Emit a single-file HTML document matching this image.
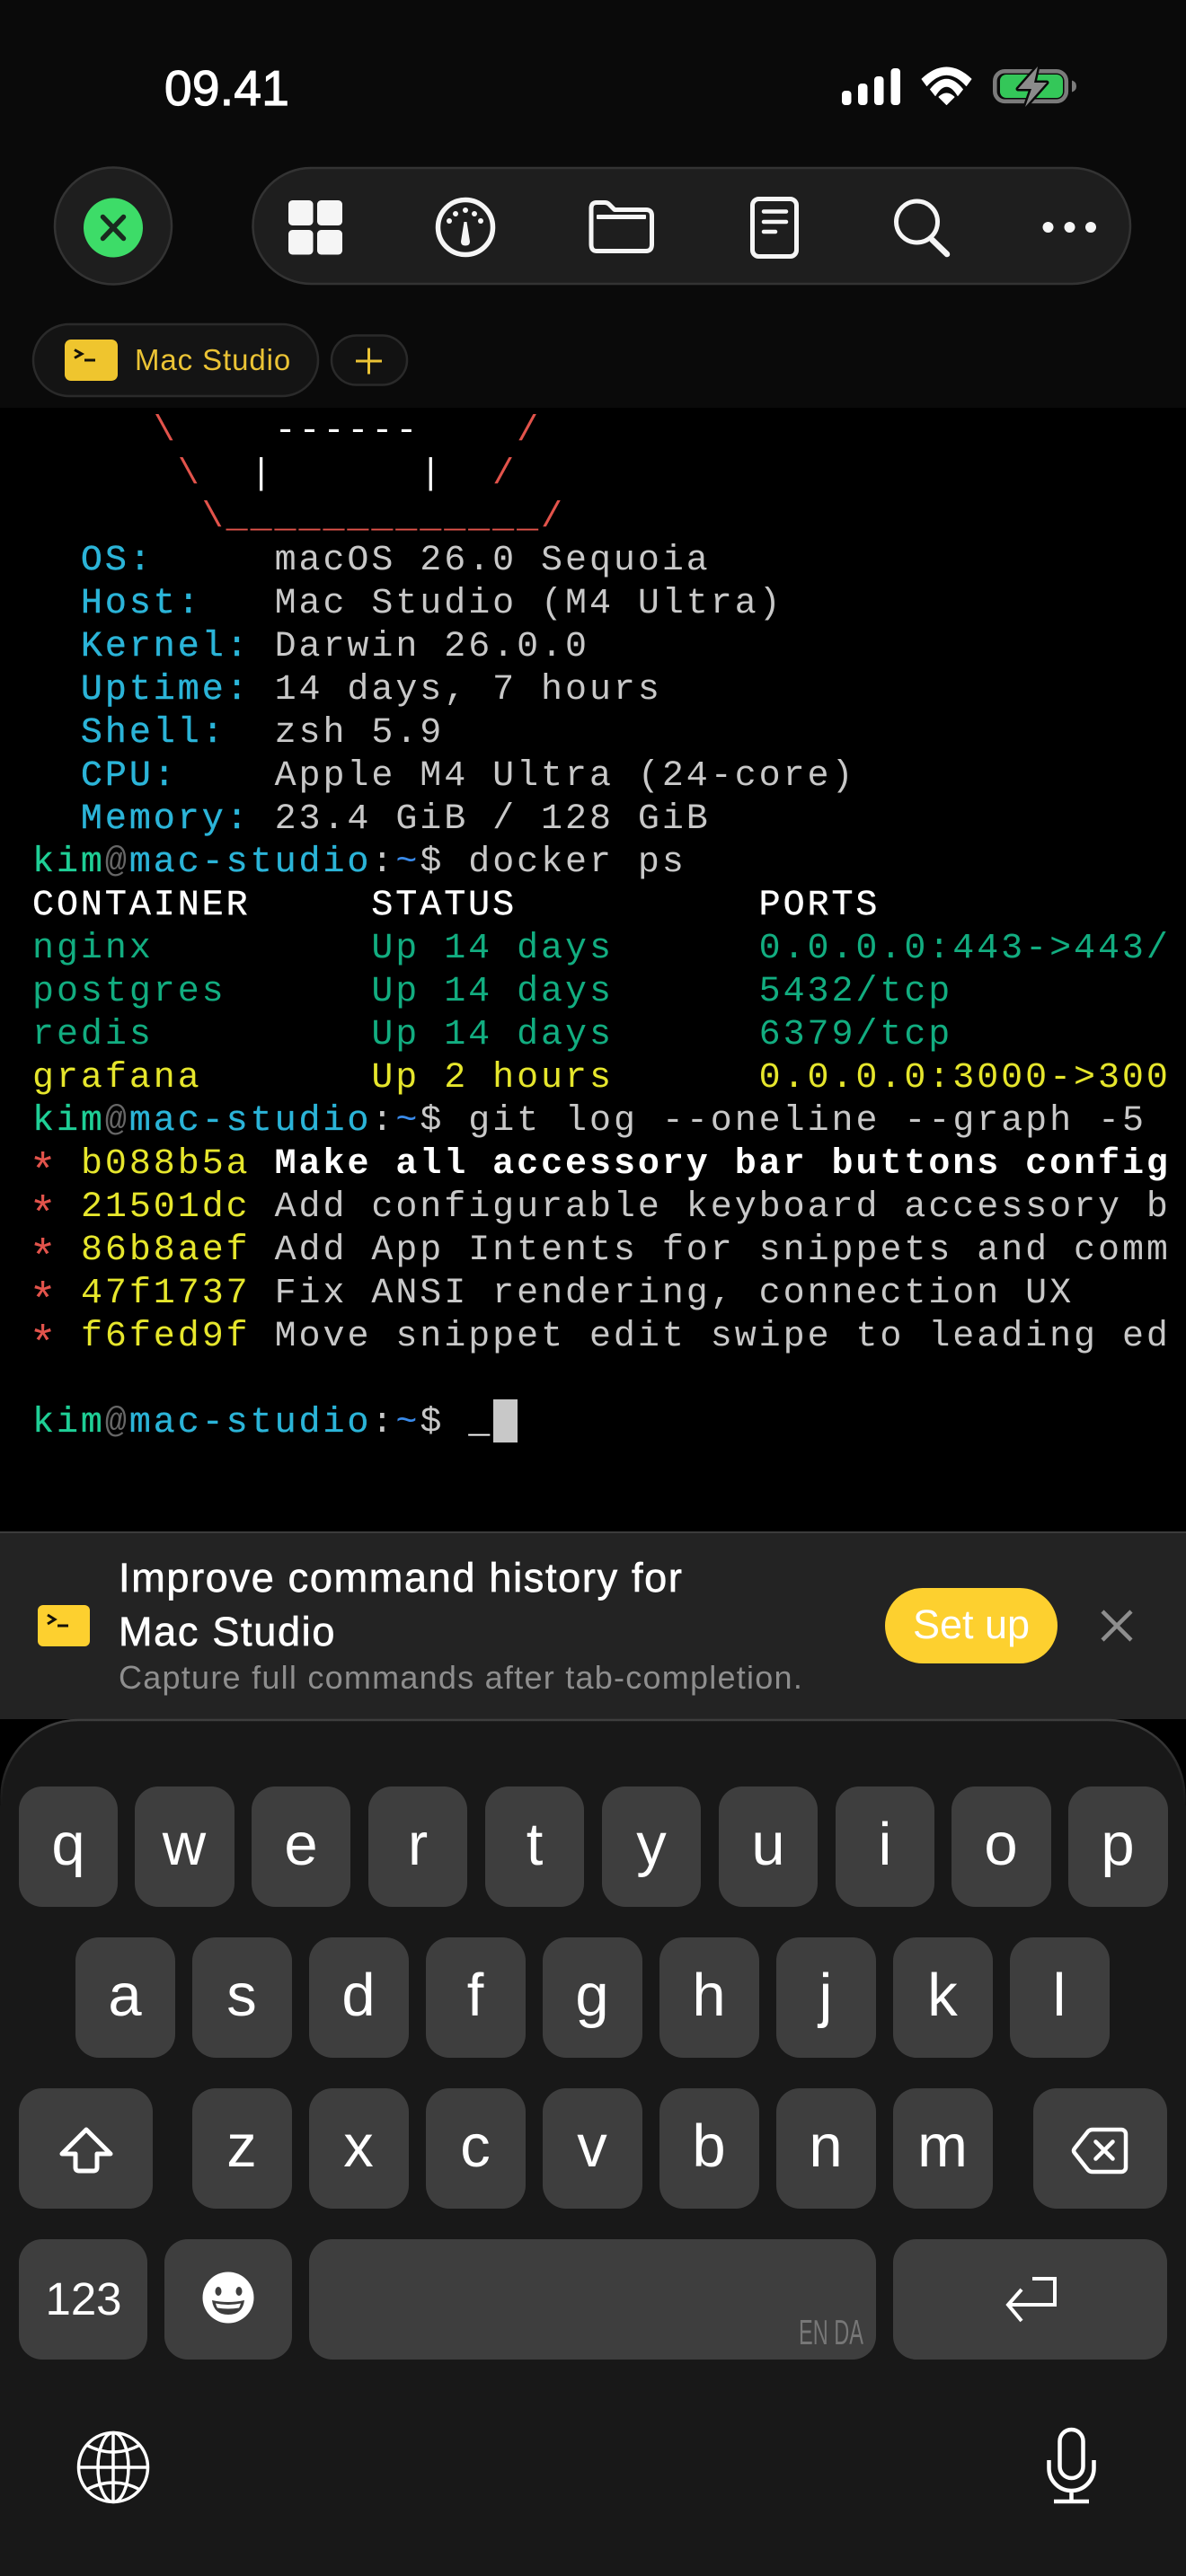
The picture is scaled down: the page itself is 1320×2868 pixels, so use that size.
<!DOCTYPE html>
<html lang="en"><head><meta charset="utf-8"><title>Terminal</title>
<style>
html,body{margin:0;padding:0;background:#000;width:1320px;height:2868px;overflow:hidden}
svg{position:absolute;left:0;top:0}
svg text{font-family:"Liberation Sans",sans-serif}
pre{position:absolute;left:36px;top:457px;margin:0;font:40px/48px "Liberation Mono",monospace;letter-spacing:2.95px;color:#c8c8c8;white-space:pre}
.r{color:#e2534b}.w{color:#fff}.l{color:#2bb4d8;-webkit-text-stroke:.4px #2bb4d8}
.g{color:#1fcf96;-webkit-text-stroke:.3px #1fcf96}.a{color:#666}.b{color:#2bb4d8;-webkit-text-stroke:.3px #2bb4d8}.t{color:#3a8bea}
.h{color:#fff;-webkit-text-stroke:.4px #fff}.d{color:#12ad80}.y{color:#e6e62c}.m{color:#fff;font-weight:bold}
.s{color:#e2534b;display:inline-block;transform:translate(0,11px) scale(1.3)}
</style></head><body>
<svg width="1320" height="2868" viewBox="0 0 1320 2868" xmlns="http://www.w3.org/2000/svg">
<defs><linearGradient id="kb" gradientUnits="userSpaceOnUse" x1="0" y1="1914" x2="0" y2="2010"><stop offset="0" stop-color="#3e3e3e"/><stop offset="1" stop-color="#181818"/></linearGradient></defs>
<rect x="0" y="0" width="1320" height="454" fill="#0a0a0a"/>
<text x="183" y="117" font-size="55" letter-spacing=".3" fill="#fff" stroke="#fff" stroke-width="1.2">09.41</text>
<!-- signal -->
<g fill="#fff"><rect x="937" y="101" width="10.500" height="16" rx="4"/><rect x="955" y="93" width="10.500" height="24" rx="4"/><rect x="973" y="85" width="10.500" height="32" rx="4"/><rect x="991.500" y="76" width="10.500" height="41" rx="4"/></g>
<!-- wifi -->
<g fill="#fff" stroke="#fff" stroke-width="1" stroke-linejoin="round"><path d="M1026 88Q1053.500 62 1081 88L1075.500 95.500Q1053.500 71 1031.500 95.500Z"/><path d="M1035.500 99.500Q1053.500 77 1071.500 99.500L1066 106.500Q1053.500 86 1041 106.500Z"/><path d="M1053.500 116.500L1045 108Q1053.500 100 1062 108Z"/></g>
<!-- battery -->
<rect x="1107.300" y="79.300" width="79.500" height="33.500" rx="11" fill="none" stroke="#7b7b7b" stroke-width="4.600"/>
<rect x="1113" y="83" width="70" height="26" rx="7" fill="#34c759"/>
<path d="M1193 89.500Q1198 91 1198 96Q1198 101 1193 102.500Z" fill="#7b7b7b"/>
<path d="M1155 74L1133 99H1148L1141 119L1165 92H1151Z" fill="#8b8b8b" stroke="#0a0a0a" stroke-width="5" paint-order="stroke" stroke-linejoin="round"/>
<!-- close -->
<circle cx="126" cy="251.500" r="65" fill="#1e1e1e" stroke="#333" stroke-width="2.500"/>
<circle cx="126" cy="253.500" r="33" fill="#3ddc68"/>
<path d="M114.500 241.500L137.500 265.500M137.500 241.500L114.500 265.500" stroke="#1a2a1f" stroke-width="5.500" stroke-linecap="round"/>
<!-- toolbar -->
<rect x="281.500" y="187" width="976.500" height="129" rx="64.500" fill="#1e1e1e" stroke="#333" stroke-width="2.500"/>
<g fill="#f5f5f5"><rect x="321" y="223" width="27.500" height="28" rx="4.500"/><rect x="353" y="223" width="28" height="28" rx="4.500"/><rect x="321" y="256" width="27.500" height="27.500" rx="4.500"/><rect x="353" y="256" width="28" height="27.500" rx="4.500"/></g>
<circle cx="518" cy="253" r="30.500" fill="none" stroke="#f5f5f5" stroke-width="5.500"/>
<g fill="#f5f5f5"><circle cx="500" cy="246" r="3"/><circle cx="507" cy="238" r="3"/><circle cx="518" cy="234" r="3"/><circle cx="528" cy="238" r="3"/><circle cx="535" cy="246" r="3"/><path d="M516.500 247H519.500L523 269Q523 273.500 518 273.500Q513 273.500 513 269Z"/></g>
<g fill="none" stroke="#f5f5f5" stroke-width="5" stroke-linejoin="round"><path d="M664 225.500H673Q676 225.500 678 227.500L684 233.500H719Q725.500 233.500 725.500 240V272Q725.500 279.500 719 279.500H664Q658 279.500 658 272V232Q658 225.500 664 225.500Z"/><rect x="837.500" y="221.500" width="49" height="64" rx="7"/></g>
<rect x="664" y="239" width="55" height="5" rx="1" fill="#f5f5f5"/>
<g stroke="#f5f5f5" stroke-width="4.500" stroke-linecap="round"><path d="M850 235.500H875M850 247H875M850 258H863"/></g>
<circle cx="1020.500" cy="247" r="23" fill="none" stroke="#f5f5f5" stroke-width="5"/>
<path d="M1037.500 267L1054 283" stroke="#f5f5f5" stroke-width="6.500" stroke-linecap="round"/>
<g fill="#f5f5f5"><circle cx="1166.500" cy="253" r="6"/><circle cx="1190.500" cy="253" r="6"/><circle cx="1214" cy="253" r="6"/></g>
<!-- tabs -->
<rect x="37" y="361" width="317" height="80" rx="40" fill="#141414" stroke="#2a2a2a" stroke-width="2.500"/>
<rect x="72" y="378" width="59" height="46" rx="7" fill="#efc52e"/>
<path d="M83 389.500L91 394L83 398.500" fill="none" stroke="#15120a" stroke-width="3"/><path d="M94 401H106" stroke="#15120a" stroke-width="3"/>
<text x="150" y="412" font-size="33" letter-spacing=".9" fill="#ebc335">Mac Studio</text>
<rect x="369" y="373.500" width="84" height="55" rx="27.500" fill="#121212" stroke="#2a2a2a" stroke-width="2.500"/>
<path d="M396 402H425M410.500 387.500V416.500" stroke="#ebc335" stroke-width="3"/>
<!-- banner -->
<rect x="0" y="1706" width="1320" height="208" fill="#232323"/>
<rect x="0" y="1705" width="1320" height="2" fill="#3c3c3c"/>
<rect x="42" y="1787" width="58" height="46" rx="6" fill="#fdd02f"/>
<path d="M53 1798L61 1803L53 1808" fill="none" stroke="#15120a" stroke-width="3"/><path d="M64 1810H76" stroke="#15120a" stroke-width="3"/>
<text x="132" y="1772" font-size="45" letter-spacing="1.7" fill="#fff" stroke="#fff" stroke-width=".7">Improve command history for</text>
<text x="132" y="1832" font-size="45" letter-spacing="1.7" fill="#fff" stroke="#fff" stroke-width=".7">Mac Studio</text>
<text x="132" y="1880" font-size="36" letter-spacing="1.25" fill="#8e8e8e">Capture full commands after tab-completion.</text>
<rect x="985" y="1768" width="192" height="84" rx="42" fill="#fdd02f"/>
<text x="1081" y="1824" font-size="45" text-anchor="middle" fill="#fff">Set up</text>
<path d="M1227 1794L1259 1826M1259 1794L1227 1826" stroke="#8e8e8e" stroke-width="4.500"/>
<!-- keyboard -->
<path d="M1.500 2010V2000A86 86 0 0 1 87 1915H1233A86 86 0 0 1 1318.500 2000V2010Z" fill="#181818" stroke="url(#kb)" stroke-width="2.500"/>
<rect x="0" y="2010" width="1320" height="858" fill="#181818"/>
<g fill="#3e3e3e">
<rect x="21" y="1989" width="110" height="134" rx="26"/><rect x="150" y="1989" width="111" height="134" rx="26"/><rect x="280" y="1989" width="110" height="134" rx="26"/><rect x="410" y="1989" width="110" height="134" rx="26"/><rect x="540" y="1989" width="110" height="134" rx="26"/><rect x="670" y="1989" width="110" height="134" rx="26"/><rect x="800" y="1989" width="110" height="134" rx="26"/><rect x="930" y="1989" width="110" height="134" rx="26"/><rect x="1059" y="1989" width="111" height="134" rx="26"/><rect x="1189" y="1989" width="111" height="134" rx="26"/>
<rect x="84" y="2157" width="111" height="134" rx="26"/><rect x="214" y="2157" width="111" height="134" rx="26"/><rect x="344" y="2157" width="111" height="134" rx="26"/><rect x="474" y="2157" width="111" height="134" rx="26"/><rect x="604" y="2157" width="111" height="134" rx="26"/><rect x="734" y="2157" width="111" height="134" rx="26"/><rect x="864" y="2157" width="111" height="134" rx="26"/><rect x="994" y="2157" width="111" height="134" rx="26"/><rect x="1124" y="2157" width="111" height="134" rx="26"/>
<rect x="21" y="2325" width="149" height="134" rx="26"/><rect x="214" y="2325" width="111" height="134" rx="26"/><rect x="344" y="2325" width="111" height="134" rx="26"/><rect x="474" y="2325" width="111" height="134" rx="26"/><rect x="604" y="2325" width="111" height="134" rx="26"/><rect x="734" y="2325" width="111" height="134" rx="26"/><rect x="864" y="2325" width="111" height="134" rx="26"/><rect x="994" y="2325" width="111" height="134" rx="26"/><rect x="1150" y="2325" width="149" height="134" rx="26"/>
<rect x="21" y="2493" width="143" height="134" rx="26"/><rect x="183" y="2493" width="142" height="134" rx="26"/><rect x="344" y="2493" width="631" height="134" rx="26"/><rect x="994" y="2493" width="305" height="134" rx="26"/>
</g>
<g font-size="67" fill="#fff" text-anchor="middle">
<text x="76" y="2076">q</text><text x="205" y="2076">w</text><text x="335" y="2076">e</text><text x="465" y="2076">r</text><text x="595" y="2076">t</text><text x="725" y="2076">y</text><text x="855" y="2076">u</text><text x="985" y="2076">i</text><text x="1114" y="2076">o</text><text x="1244" y="2076">p</text>
<text x="139" y="2244">a</text><text x="269" y="2244">s</text><text x="399" y="2244">d</text><text x="529" y="2244">f</text><text x="659" y="2244">g</text><text x="789" y="2244">h</text><text x="919" y="2244">j</text><text x="1049" y="2244">k</text><text x="1179" y="2244">l</text>
<text x="269" y="2412">z</text><text x="399" y="2412">x</text><text x="529" y="2412">c</text><text x="659" y="2412">v</text><text x="789" y="2412">b</text><text x="919" y="2412">n</text><text x="1049" y="2412">m</text>
</g>
<text x="93" y="2577" font-size="51" fill="#fff" text-anchor="middle">123</text>
<text x="889" y="2610" font-size="39" fill="#777" textLength="72" lengthAdjust="spacingAndGlyphs">EN DA</text>
<!-- shift -->
<path d="M96 2371L69 2398H84V2413Q84 2417 88 2417H104Q108 2417 108 2413V2398H123Z" fill="none" stroke="#fff" stroke-width="5" stroke-linejoin="round"/>
<!-- delete -->
<path d="M1216 2371H1248A5 5 0 0 1 1253 2376V2413A5 5 0 0 1 1248 2418H1216Q1213 2418 1211 2416L1196 2397Q1194 2394.500 1196 2392L1211 2373Q1213 2371 1216 2371Z" fill="none" stroke="#fff" stroke-width="4.500"/>
<path d="M1219.500 2384.500L1238.500 2403.500M1238.500 2384.500L1219.500 2403.500" stroke="#fff" stroke-width="4.500" stroke-linecap="round"/>
<!-- emoji -->
<circle cx="254" cy="2558" r="28.500" fill="#fff"/>
<ellipse cx="243" cy="2551" rx="3.500" ry="5" fill="#3e3e3e"/><ellipse cx="266" cy="2551" rx="3.500" ry="5" fill="#3e3e3e"/>
<path d="M236 2561Q254 2565 272 2561Q270 2577 254 2577Q238 2577 236 2561Z" fill="#3e3e3e"/>
<path d="M240 2564.500Q254 2567.500 268 2564.500Q267 2568 266 2569.500Q254 2571.500 242 2569.500Q241 2568 240 2564.500Z" fill="#fff"/>
<!-- return -->
<path d="M1149 2537H1174V2566H1123M1137 2549L1122 2566L1137 2584" fill="none" stroke="#fff" stroke-width="4"/>
<!-- globe -->
<g fill="none" stroke="#fff" stroke-width="3.500"><circle cx="126" cy="2747" r="38.500"/><ellipse cx="126" cy="2747" rx="17" ry="38.500"/><path d="M126 2708.500V2785.500M87.500 2747H164.500M96 2722Q126 2738 156 2722M96 2772Q126 2756 156 2772"/></g>
<!-- mic -->
<g fill="none" stroke="#fff" stroke-width="4.500"><rect x="1179.500" y="2705" width="26" height="54" rx="13"/><path d="M1167.500 2739V2748A25 25 0 0 0 1217.500 2748V2739M1192.500 2773V2784M1173 2785H1212" /></g>
</svg>
<pre><span class="r">     \</span>    <span class="w">------</span>    <span class="r">/</span>
<span class="r">      \</span>  <span class="w">|      |</span>  <span class="r">/</span>
<span class="r">       \_____________/</span>
  <span class="l">OS:</span>     macOS 26.0 Sequoia
  <span class="l">Host:</span>   Mac Studio (M4 Ultra)
  <span class="l">Kernel:</span> Darwin 26.0.0
  <span class="l">Uptime:</span> 14 days, 7 hours
  <span class="l">Shell:</span>  zsh 5.9
  <span class="l">CPU:</span>    Apple M4 Ultra (24-core)
  <span class="l">Memory:</span> 23.4 GiB / 128 GiB
<span class="g">kim</span><span class="a">@</span><span class="b">mac-studio</span>:<span class="t">~</span>$ docker ps
<span class="h">CONTAINER     STATUS          PORTS</span>
<span class="d">nginx         Up 14 days      0.0.0.0:443-&gt;443/</span>
<span class="d">postgres      Up 14 days      5432/tcp</span>
<span class="d">redis         Up 14 days      6379/tcp</span>
<span class="y">grafana       Up 2 hours      0.0.0.0:3000-&gt;300</span>
<span class="g">kim</span><span class="a">@</span><span class="b">mac-studio</span>:<span class="t">~</span>$ git log --oneline --graph -5
<span class="s">*</span> <span class="y">b088b5a</span> <span class="m">Make all accessory bar buttons config</span>
<span class="s">*</span> <span class="y">21501dc</span> Add configurable keyboard accessory b
<span class="s">*</span> <span class="y">86b8aef</span> Add App Intents for snippets and comm
<span class="s">*</span> <span class="y">47f1737</span> Fix ANSI rendering, connection UX
<span class="s">*</span> <span class="y">f6fed9f</span> Move snippet edit swipe to leading ed

<span class="g">kim</span><span class="a">@</span><span class="b">mac-studio</span>:<span class="t">~</span>$ <span class="w">_</span></pre>
<div style="position:absolute;left:549px;top:1558px;width:27px;height:48px;background:#c8c8c8"></div>
</body></html>
